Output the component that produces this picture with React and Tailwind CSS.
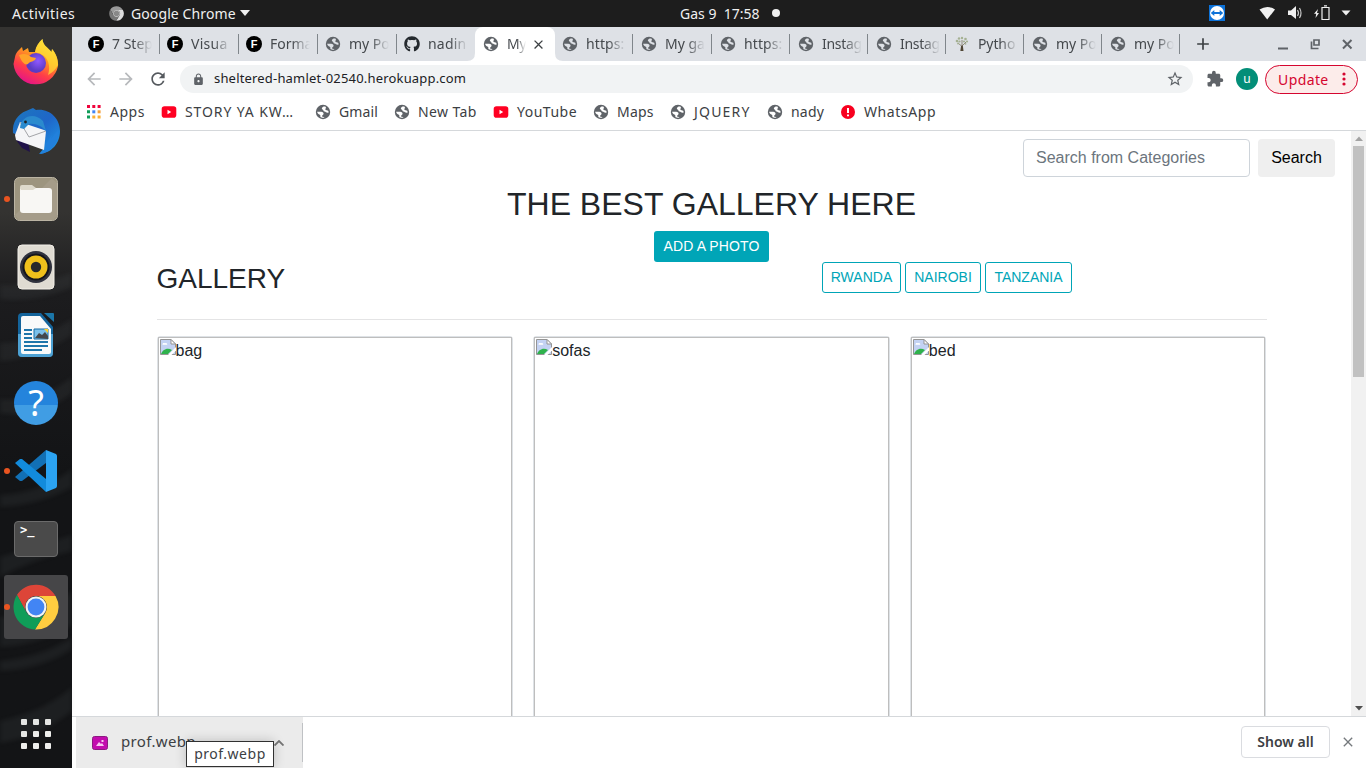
import { FaGithub } from "react-icons/fa";
import { MdExtension, MdLock, MdRefresh, MdArrowBack, MdArrowForward, MdStarBorder, MdClose, MdAdd } from "react-icons/md";

const Globe = ({ light = "#fff" }) => (
  <svg viewBox="0 0 16 16" className="block size-4 shrink-0">
    <circle cx="8" cy="8" r="7.200" fill="#5f6368" />
    <path d="M8.600 2.400C6.900 3.200 6.200 4.800 7.600 5.400C8.700 5.800 8.300 7.300 9.500 7.600C10.900 7.900 11.500 9.300 13.500 8.700C13.900 6.600 12.900 6.300 11.600 6.200C10.300 6.100 10 5.300 10.600 4.600C11.200 3.900 11 3 10.200 2.400Z" fill={light} />
    <path d="M2.100 7.700C3.700 8 5.600 7.200 7.200 8C8.700 8.700 8.900 9.700 8.300 10.500C7.800 11.200 7 11.300 7.100 12.200C7.200 12.900 8.500 12.900 9.600 12.900C8.700 14 6.800 14 5.700 13.300C4.900 12.400 5.700 11.600 5.100 10.900C4.400 10.100 2.300 10 2.100 7.700Z" fill={light} />
  </svg>
);

const LetterF = () => (
  <span className="flex size-4 shrink-0 items-center justify-center rounded-full bg-black font-['Liberation_Sans',sans-serif] text-[11px] leading-none font-bold text-white">F</span>
);

const Tree = () => (
  <svg viewBox="0 0 16 16" className="block size-4 shrink-0">
    <path d="M7 15l.5-5L4 7M8 10l4-4M8 9V4" stroke="#7c745f" strokeWidth=".8" fill="none" />
    <path d="M7.200 9.500h1.600l.7 5.500H6.500z" fill="#4f4534" />
    <g fill="#a5b193"><circle cx="3" cy="5" r="1.300" /><circle cx="5" cy="2.500" r="1.200" /><circle cx="8" cy="2" r="1.200" /><circle cx="11.500" cy="3" r="1.300" /><circle cx="13" cy="5.500" r="1.100" /><circle cx="5.500" cy="5.500" r="1.100" /><circle cx="10" cy="5.500" r="1.100" /><circle cx="4" cy="7.500" r=".9" /><circle cx="11.500" cy="7.800" r=".9" /></g>
  </svg>
);

const YouTube = () => (
  <svg viewBox="0 0 16 16" className="block size-4 shrink-0">
    <rect x=".7" y="2.300" width="14.600" height="11.400" rx="2.800" fill="#ff0022" />
    <path d="M6.500 5.800v4.400L10.200 8z" fill="#fff" />
  </svg>
);

const Alert = () => (
  <svg viewBox="0 0 16 16" className="block size-4 shrink-0">
    <circle cx="8" cy="8" r="7" fill="#f8001f" />
    <path d="M8 4v5M8 10.500v1.800" stroke="#fff" strokeWidth="2" />
  </svg>
);

const AppsGrid = () => (
  <svg viewBox="0 0 14 14" className="block size-[14px] shrink-0">
    <path d="M0 0h3v3H0zM5.300 0h3v3h-3zM10.600 0h3v3h-3z" fill="#f0043c" />
    <path d="M0 5.300h3v3H0zM0 10.600h3v3H0z" fill="#0f9d58" />
    <path d="M5.300 5.300h3v3h-3z" fill="#4285f4" />
    <path d="M10.600 5.300h3v3h-3z" fill="#f4a03c" />
    <path d="M5.300 10.600h3v3h-3zM10.600 10.600h3v3h-3z" fill="#fbb034" />
  </svg>
);

const tabGlobe = <Globe light="#dee1e6" />;

const tabsLeft = [
  { icon: <LetterF />, text: "7 Step" },
  { icon: <LetterF />, text: "Visua", track: "tracking-[0.3px]" },
  { icon: <LetterF />, text: "Forma" },
  { icon: tabGlobe, text: "my Po" },
  { icon: <FaGithub className="size-4 shrink-0 text-[#24292e]" />, text: "nadin", track: "tracking-[0.2px]" },
];
const tabsRight = [
  { icon: tabGlobe, text: "https:", track: "tracking-[0.1px]" },
  { icon: tabGlobe, text: "My ga" },
  { icon: tabGlobe, text: "https:", track: "tracking-[0.1px]" },
  { icon: tabGlobe, text: "Instag", track: "tracking-[-0.3px]" },
  { icon: tabGlobe, text: "Instag", track: "tracking-[-0.3px]" },
  { icon: <Tree />, text: "Pytho", track: "tracking-[-0.1px]" },
  { icon: tabGlobe, text: "my Po" },
  { icon: tabGlobe, text: "my Po" },
];

function Tab({ icon, text, track = "", width, pad, line }) {
  return (
    <div className={`flex h-5 shrink-0 items-center gap-2 ${pad} ${width} ${line ? "border-r border-[#80868b]" : ""}`}>
      {icon}
      <span className={`-mt-px block w-[40px] whitespace-nowrap [mask-image:linear-gradient(to_right,black_55%,transparent)] ${track}`}>{text}</span>
    </div>
  );
}

function TabStrip() {
  return (
    <div className="flex h-[34px] items-center bg-[#dee1e6] pl-[9px] text-[14px] text-[#45494d]">
      {tabsLeft.map((t, i) => (
        <Tab key={i} {...t} pad="pl-[7px]" width={i < 4 ? "w-[79px]" : "w-[78px]"} line={i < 4} />
      ))}
      <div className="relative flex h-full w-[80px] shrink-0 items-center rounded-t-lg bg-white pl-2">
        <svg viewBox="0 0 8 8" className="absolute bottom-0 -left-2 size-2"><path d="M8 0v8H0Q8 8 8 0z" fill="#fff" /></svg>
        <svg viewBox="0 0 8 8" className="absolute -right-2 bottom-0 size-2"><path d="M0 0v8h8Q0 8 0 0z" fill="#fff" /></svg>
        <Globe />
        <span className="-mt-px ml-2 block w-[19px] whitespace-nowrap tracking-[-0.3px] [mask-image:linear-gradient(to_right,black_50%,transparent)]">My</span>
        <MdClose className="ml-[5px] size-[15px] text-[#3c4043]" />
      </div>
      {tabsRight.map((t, i) => (
        <Tab key={i} {...t} pad={i === 0 ? "pl-[7px]" : "pl-2"} width={i === 1 ? "w-[79px]" : "w-[78px]"} line={true} />
      ))}
      <MdAdd className="ml-[13px] size-5 text-[#3c4043]" />
      <svg viewBox="0 0 76 16" className="mr-3 ml-auto h-4 w-[76px]" fill="none" stroke="#5f6368" strokeWidth="2">
        <path d="M0 12.500h10M65 4l8.500 8.500M73.500 4L65 12.500" />
        <path d="M33.500 5.500v7h7M36 4h5v5h-5z" strokeWidth="1.700" />
      </svg>
    </div>
  );
}

function Toolbar() {
  return (
    <div className="flex h-[35px] items-center pt-px text-[14px]">
      <MdArrowBack className="ml-3 size-5 text-[#b7b9bc]" />
      <MdArrowForward className="ml-3 size-5 text-[#b7b9bc]" />
      <MdRefresh className="ml-3 size-5 text-[#55595e]" />
      <div className="ml-3 flex h-7 w-[1013px] items-center rounded-full bg-[#f1f3f4] pr-[9px] pl-3">
        <MdLock className="size-[13px] text-[#5f6368]" />
        <span className="ml-[9px] text-[13px] tracking-[0.18px] text-[#202124]">sheltered-hamlet-02540.herokuapp.com</span>
        <MdStarBorder className="ml-auto size-[18px] text-[#5f6368]" />
      </div>
      <MdExtension className="ml-[13px] size-[18px] text-[#5f6368]" />
      <span className="ml-3 flex size-[22px] items-center justify-center rounded-full bg-[#038e78] text-[12px] leading-none text-white">u</span>
      <div className="ml-[7px] flex h-[29px] w-[93px] items-center rounded-full border border-[#d5052f] bg-[#fcecea] pl-3 text-[14px] tracking-[0.4px] text-[#d5052f]">
        Update
        <svg viewBox="0 0 4 14" className="mr-[11px] ml-auto h-[14px] w-1" fill="currentColor"><circle cx="2" cy="2" r="1.600" /><circle cx="2" cy="7" r="1.600" /><circle cx="2" cy="12" r="1.600" /></svg>
      </div>
    </div>
  );
}

const marks = [
  { icon: <AppsGrid />, text: "Apps", style: "w-[74px] gap-[9px] tracking-[0.5px]" },
  { icon: <YouTube />, text: "STORY YA KW…", style: "w-[154px] gap-2 tracking-[0.9px]" },
  { icon: <Globe />, text: "Gmail", style: "w-[79px] gap-2 tracking-[0.1px]" },
  { icon: <Globe />, text: "New Tab", style: "w-[99px] gap-2 tracking-[0.4px]" },
  { icon: <YouTube />, text: "YouTube", style: "w-[100px] gap-2 tracking-[0.5px]" },
  { icon: <Globe />, text: "Maps", style: "w-[77px] gap-2 tracking-[0.2px]" },
  { icon: <Globe />, text: "JQUERY", style: "w-[97px] gap-2 tracking-[1.2px]" },
  { icon: <Globe />, text: "nady", style: "w-[73px] gap-2 tracking-[0.2px]" },
  { icon: <Alert />, text: "WhatsApp", style: "w-[110px] gap-2 tracking-[0.6px]" },
];

function Bookmarks() {
  return (
    <div className="flex h-[35px] items-center border-b border-[#d5d8db] pb-[3px] pl-[15px] text-[14px] text-[#3c4043]">
      {marks.map((m) => (
        <div key={m.text} className={`flex shrink-0 items-center whitespace-nowrap ${m.style}`}>
          {m.icon}
          <span>{m.text}</span>
        </div>
      ))}
    </div>
  );
}

const Broken = () => (
  <svg viewBox="0 0 16 16" className="block size-4 shrink-0">
    <path d="M.5.500h10.500l4.500 4.500v10.500H.500z" fill="#c3d2f3" />
    <path d="M2.500 5.500c0-1.500 2-1.700 2.500-1 1-1 2.500 0 2.200 1.300H2.500z" fill="#fff" />
    <path d="M1 15c1.500-4 6-7 11-4l-4 4z" fill="#2fb24c" />
    <path d="M.5 15.500V.5h10.500l4.500 4.500v10.500z" fill="none" stroke="#959595" />
    <path d="M8 16l8-8v3.500L11.500 16z" fill="#fff" />
    <path d="M11 .5V5h4.500z" fill="#fff" stroke="#959595" />
  </svg>
);

function Page() {
  return (
    <div className="flex min-h-0 flex-1 font-['Liberation_Sans',Arial,sans-serif] text-base text-[#212529]">
      <main className="flex min-w-0 flex-1 flex-col overflow-hidden pt-2">
        <div className="flex h-[38px] shrink-0 justify-end gap-2 pr-4">
          <div className="flex w-[227px] items-center rounded border border-[#ced4da] px-3 text-[#6c757d]">Search from Categories</div>
          <div className="flex w-[77px] items-center justify-center rounded bg-[#efefef] text-black">Search</div>
        </div>
        <h1 className="mt-2 h-[46px] shrink-0 text-center text-[32px] leading-[38px]">THE BEST GALLERY HERE</h1>
        <div className="mx-auto flex h-[31px] w-[115px] shrink-0 items-center justify-center rounded-[3px] bg-[#00a5b7] text-[14px] tracking-[0.1px] text-white">ADD A PHOTO</div>
        <div className="mx-auto flex w-[1110px] shrink-0">
          <h2 className="w-[665px] text-[28px] leading-[34px]">GALLERY</h2>
          <div className="flex h-[31px] gap-1 text-[14px] text-[#00a5b7]">
            <span className="flex w-[79px] items-center justify-center rounded-[3px] border border-[#00a5b7] pl-px">RWANDA</span>
            <span className="flex w-[76px] items-center justify-center rounded-[3px] border border-[#00a5b7] pl-px">NAIROBI</span>
            <span className="flex w-[87px] items-center justify-center rounded-[3px] border border-[#00a5b7] pl-px">TANZANIA</span>
          </div>
        </div>
        <div className="mx-auto mt-[23px] h-px w-[1110px] shrink-0 bg-[#e4e4e5]" />
        <div className="mx-auto mt-4 grid min-h-0 w-[1110px] flex-1 grid-cols-3 gap-[20px]">
          {["bag", "sofas", "bed"].map((n) => (
            <div key={n} className="h-[520px] rounded-[3px] border border-[#dee2e6]">
              <div className="flex h-full border border-[#bebebe] pt-px pl-px">
                <Broken />
                <span className="leading-6">{n}</span>
              </div>
            </div>
          ))}
        </div>
      </main>
      <div className="flex w-[15px] flex-col items-center justify-between bg-[#f1f1f1] pt-[5px] pb-[5px]">
        <svg viewBox="0 0 8 5" className="h-[5px] w-2 shrink-0"><path d="M0 5l4-4.500L8 5z" fill="#a3a3a3" /></svg>
        <div className="mt-[5px] mb-auto h-[231px] w-[11px] bg-[#c1c1c1]" />
        <svg viewBox="0 0 8 5" className="h-[5px] w-2 shrink-0"><path d="M0 0l4 4.500L8 0z" fill="#505050" /></svg>
      </div>
    </div>
  );
}

function Downloads() {
  return (
    <div className="flex h-[52px] shrink-0 border-t border-[#d5d8db] pl-1 text-[#3c4043]">
      <div className="relative flex w-[227px] items-center bg-[#ebebeb] pl-4">
        <svg viewBox="0 0 16 14" className="h-[14px] w-4">
          <rect x=".5" y=".5" width="15" height="13" rx="2" fill="#c30cae" stroke="#8b1b80" />
          <path d="M4 10l3-4 2 2 1-1 2 3zM9.500 4h2v2h-2z" fill="#f6c7f0" />
        </svg>
        <span className="-mt-[2px] ml-[13px] text-[15px] tracking-[0.35px]">prof.webp</span>
        <svg viewBox="0 0 10 6" className="mr-[19px] ml-auto h-[6px] w-[10px]" fill="none" stroke="#757575" strokeWidth="1.800"><path d="M.5 5.500L5 1l4.500 4.500" /></svg>
        <span className="absolute top-[6px] right-0 h-[39px] w-px bg-[#bfc1c4]" />
        <span className="absolute top-[24px] left-[110px] flex h-[26px] w-[88px] items-center justify-center border border-[#303030] bg-white pb-px text-[14px] tracking-[0.5px] shadow-[0_0_12px_rgba(0,0,0,0.2)]">prof.webp</span>
      </div>
      <div className="mt-[9px] mr-[10px] ml-auto flex h-8 w-[89px] items-center justify-center rounded border border-[#dadce0] pb-px text-[14px] font-semibold">Show all</div>
      <MdClose className="mt-[17px] mr-[10px] size-4 text-[#75797d]" />
    </div>
  );
}

const FirefoxIcon = () => (
  <svg viewBox="0 0 46 46" className="-mt-[2px] size-[46px]">
    <defs>
      <linearGradient id="ffa" x1=".8" y1="0" x2=".3" y2="1"><stop stopColor="#fff044" /><stop offset=".4" stopColor="#ff9a20" /><stop offset=".7" stopColor="#ff3d48" /><stop offset="1" stopColor="#e3128b" /></linearGradient>
      <radialGradient id="ffb" cx=".6" cy=".4"><stop stopColor="#9059ff" /><stop offset="1" stopColor="#5b3bc4" /></radialGradient>
    </defs>
    <path d="M2 18C3 13 6 11 9 8l1 4 5-3 1 4 6 0C23 7 26 3 29.500 0c0 6 5 8 9 13l.5-3c5 5 6.500 13 6 17A22.500 22.500 0 0 1 .5 25z" fill="url(#ffa)" />
    <path d="M29.500 0c0 6 5 8 9 13l.5-3c4 5 6 10 6 16-3 5-6 8-10 10 3-9 0-18-7-21l-6-2C23 7 26 3 29.500 0z" fill="#ffdf35" opacity=".7" />
    <circle cx="23" cy="24" r="10" fill="url(#ffb)" />
    <path d="M6 16c5-2 9-1 12 2l5 1c-1 4-6 3-8 6-3 2-7-3-9-9z" fill="#ffa329" />
  </svg>
);

const ThunderbirdIcon = () => (
  <svg viewBox="0 0 48 48" className="size-12">
    <defs><linearGradient id="tb" x2="1" y2="1"><stop stopColor="#1c77bd" /><stop offset=".5" stopColor="#1f66c9" /><stop offset="1" stopColor="#1e9be8" /></linearGradient></defs>
    <path d="M1 26C0 15 6 7 14 4l7-3 3 2c13-2 24 8 24 21 0 12-8 22-21 23l5-6z" fill="url(#tb)" />
    <path d="M4 33l6 8 8 4-2-10z" fill="#20124a" />
    <path d="M8 15l24 8 2 1-2 19L4 33 3 28z" fill="#f5f5f7" />
    <path d="M8 15l9 15 17-6" fill="none" stroke="#a3a4a8" />
    <path d="M8 21C9 9 22 5 31 14l3 10c-4-5-11-8-17-7l-5 5z" fill="#2b8ace" />
    <circle cx="13.500" cy="15" r="1.400" fill="#222" />
    <path d="M46 23l-7 9 1-4-7 10 1 4-6 5c12-2 19-12 18-24z" fill="#2280dc" />
  </svg>
);

const FilesIcon = () => (
  <svg viewBox="0 0 44 44" className="size-11">
    <rect x=".5" y=".5" width="43" height="43" rx="5" fill="#9d957f" stroke="#bbb4a3" />
    <path d="M1 38L38 1l5 5v33l-4 4H5z" fill="#aaa28f" opacity=".6" />
    <path d="M6 14V10q0-2 2-2h10l4 3v5z" fill="#dedacc" />
    <rect x="6" y="11" width="32" height="25" rx="3" fill="#f8f7f4" />
    <path d="M7 13h12l3-2h-2l-2-2H7z" fill="#dedacc" />
  </svg>
);

const RhythmboxIcon = () => (
  <svg viewBox="0 0 44 46" className="h-[46px] w-11">
    <rect x="4" y="1" width="36" height="44" rx="4" fill="#dfdbd2" stroke="#f2efe8" />
    <circle cx="22" cy="23" r="16" fill="#30323e" /><circle cx="22" cy="23" r="13.500" fill="#15151b" />
    <circle cx="22" cy="23" r="11.500" fill="#efc01c" /><circle cx="22" cy="23" r="5.200" fill="#25282b" />
  </svg>
);

const WriterIcon = () => (
  <svg viewBox="0 0 38 46" className="h-[46px] w-[38px]">
    <path d="M5 1h19l12 14v26q0 4-4 4H5q-4 0-4-4V5q0-4 4-4z" fill="#14649b" />
    <path d="M1 22h35v19q0 4-4 4H5q-4 0-4-4z" fill="#4da1d3" />
    <path d="M6 4h17l11 13v23q0 2-2 2H6q-2 0-2-2V6q0-2 2-2z" fill="#f9fafa" />
    <path d="M27 1h9q1 0 1 1v8z" fill="#1b76a8" />
    <path d="M7 18h8M7 22h8M7 26h8M7 30h24M7 34h24M7 38h18" stroke="#1d75aa" strokeWidth="2" />
    <path d="M17 17h14v10H17z" fill="#7cc1ea" stroke="#176ca4" /><path d="M18 26l4-5 3 2 3-3 3 4v3z" fill="#45484b" /><path d="M27 17h4v4z" fill="#ffd329" />
  </svg>
);

const CodeIcon = () => (
  <svg viewBox="0 0 44 44" className="size-11">
    <path d="M1 28l5 4 2 0L32 14V1z" fill="#1270b5" />
    <path d="M1 14l5-4 2 0 24 20v13z" fill="#128bdc" />
    <path d="M32 1l10 4q1 1 1 2v30q0 1-1 2l-10 4z" fill="#2ba3f2" />
  </svg>
);

const ChromeIcon = ({ className, gray }) => (
  <svg viewBox="0 0 46 46" className={className}>
    <path d="M4 11A22.500 22.500 0 0 1 42.500 12H23A11 11 0 0 0 13.500 28.500z" fill={gray ? "#999" : "#dd4538"} />
    <path d="M42.500 12A22.500 22.500 0 0 1 22 45.500L32.500 28.500A11 11 0 0 0 23 12z" fill={gray ? "#ddd" : "#ffcd40"} />
    <path d="M4 11A22.500 22.500 0 0 0 22 45.500L32.500 28.500A11 11 0 0 1 13.500 28.500z" fill={gray ? "#777" : "#0f9d58"} />
    <circle cx="23" cy="23" r="10.500" fill={gray ? "#ccc" : "#f3f5f4"} /><circle cx="23" cy="23" r="8.400" fill={gray ? "#888" : "#4285f4"} />
  </svg>
);

const dock = [
  { icon: <FirefoxIcon /> },
  { icon: <ThunderbirdIcon /> },
  { icon: <FilesIcon />, open: true },
  { icon: <RhythmboxIcon /> },
  { icon: <WriterIcon /> },
  { icon: <div className="flex size-11 items-center justify-center rounded-full bg-linear-to-b from-[#2484dc] from-55% to-[#409de4] to-55% font-['Noto_Sans',sans-serif] text-[36px] leading-none text-white">?</div> },
  { icon: <CodeIcon />, open: true },
  { icon: <div className="h-9 w-11 rounded border border-[#6b6b6b] bg-[#4a4a4a] pl-[5px] font-['DejaVu_Sans_Mono',monospace] text-[12px] leading-[16px] font-bold text-white">&gt;_</div> },
  { icon: <ChromeIcon className="size-[46px]" />, open: true, active: true },
];

function Dock() {
  return (
    <aside className="relative flex w-[72px] shrink-0 flex-col items-center bg-linear-to-b from-[#343331] from-25% via-[#1c1c1e] via-36% to-[#131416] to-60% pt-[2px]">
      <svg viewBox="0 0 72 741" className="absolute inset-0 h-[741px] w-[72px] blur-[2px]" fill="#8a8d90" fillOpacity=".09">
        <path d="M0 258q36 2 72-12v14q-36 16-72 12zM0 316q36 0 72-24v16q-36 24-72 26zM0 372q40 4 72-22v16q-32 26-72 20zM0 468q40-2 72-26v18q-32 18-72 20zM0 530q34-10 72-22v16q-38 8-72 26zM0 590q42-2 72-26v34q-32 20-72 22zM0 634q42-4 72-24v12q-30 20-72 22zM0 694q45-10 72-34v24q-32 26-72 32z" />
      </svg>
      {dock.map((d, i) => (
        <div key={i} className="relative flex h-[68px] w-[72px] shrink-0 items-center justify-center">
          <div className={`flex size-16 items-center justify-center ${d.active ? "rounded-[3px] bg-[#464648]" : ""}`}>{d.icon}</div>
          {d.open && <span className="absolute top-[31px] left-1 size-[6px] rounded-full bg-[#e95420]" />}
        </div>
      ))}
      <div className="mt-auto mb-[19px] grid grid-cols-3 gap-[6px]">
        {Array.from({ length: 9 }, (_, i) => (
          <span key={i} className="size-[6px] rounded-[1px] bg-[#eeeeec]" />
        ))}
      </div>
    </aside>
  );
}

function TopBar() {
  return (
    <header className="flex h-[27px] shrink-0 items-center bg-[#1d1d1d] pb-px pl-3 text-[14px] text-[#f0f0f0]">
      <span className="w-[97px] tracking-[0.5px]">Activities</span>
      <ChromeIcon className="size-[15px]" gray />
      <span className="ml-[7px] w-[109px] whitespace-nowrap tracking-[0.1px]">Google Chrome</span>
      <svg viewBox="0 0 10 6" className="h-[6px] w-[10px]"><path d="M0 0h10L5 6z" fill="#f0f0f0" /></svg>
      <span className="ml-[430px] w-[92px] whitespace-pre">Gas 9  17:58</span>
      <span className="size-2 rounded-full bg-[#f0f0f0]" />
      <svg viewBox="0 0 16 16" className="ml-auto size-4">
        <path d="M0 0h16v16H0z" fill="#0d72d8" /><circle cx="8" cy="8" r="7" fill="#fff" />
        <path d="M1.800 8l3.500-3v2h5.400V5l3.500 3-3.500 3V9H5.300v2z" fill="#0d72d8" />
      </svg>
      <svg viewBox="0 0 94 16" className="mr-[15px] ml-8 h-4 w-[94px]" fill="#f0f0f0">
        <path d="M2.500 4.500q8-5 15.500 0L10.200 14.500z" />
        <path d="M31 5.500h3l5-4.500v13l-5-4H31z" />
        <path d="M40.500 5q2 3 0 6M42.500 3q3 5 0 10" fill="none" stroke="#c6c6c6" strokeWidth="1.200" />
        <path d="M61 4l-4 4.800h2.200L58.500 13l3.500-5h-2z" />
        <path d="M65 2.500h7v12h-7zM67 .8h3" fill="none" stroke="#f0f0f0" strokeWidth="1.200" />
        <path d="M84.500 5.500h9L89 10.500z" />
      </svg>
    </header>
  );
}

export default function App() {
  return (
    <div className="flex h-[768px] w-[1366px] flex-col overflow-hidden bg-white font-['Noto_Sans',sans-serif]">
      <TopBar />
      <div className="flex min-h-0 flex-1">
        <Dock />
        <div className="flex min-w-0 flex-1 flex-col">
          <TabStrip />
          <Toolbar />
          <Bookmarks />
          <Page />
          <Downloads />
        </div>
      </div>
    </div>
  );
}
